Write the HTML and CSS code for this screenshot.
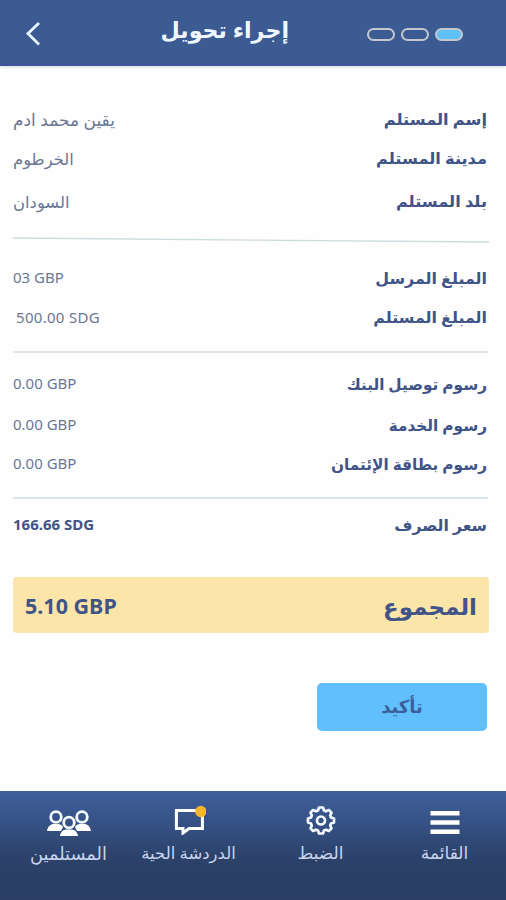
FILE: index.html
```
<!DOCTYPE html>
<html lang="ar" dir="rtl">
<head>
    <meta charset="UTF-8">
    <meta name="viewport" content="width=device-width, initial-scale=1.0">
    <title>إجراء تحويل</title>
    <link rel="stylesheet" href="styles.css">
</head>
<body>
    <header class="header">
        <div class="steps">
            <span class="step active"></span>
            <span class="step"></span>
            <span class="step"></span>
        </div>
        <h1>إجراء تحويل</h1>
        <svg class="back" viewBox="0 0 16 26"><path d="M14 2 3 12.500 14 23.500"/></svg>
    </header>

    <main class="content">
        <dl class="rows recipient">
            <div class="row"><dt>إسم المستلم</dt><dd class="name">يقين محمد ادم</dd></div>
            <div class="row"><dt>مدينة المستلم</dt><dd>الخرطوم</dd></div>
            <div class="row"><dt>بلد المستلم</dt><dd>السودان</dd></div>
        </dl>
        <svg class="slanted" viewBox="0 0 476 6"><path d="M0 1 476 5"/></svg>
        <dl class="rows amounts">
            <div class="row"><dt>المبلغ المرسل</dt><dd dir="ltr">03 GBP</dd></div>
            <div class="row"><dt>المبلغ المستلم</dt><dd class="received" dir="ltr">500.00 SDG</dd></div>
        </dl>
        <hr>
        <dl class="rows fees">
            <div class="row"><dt>رسوم توصيل البنك</dt><dd dir="ltr">0.00 GBP</dd></div>
            <div class="row"><dt>رسوم الخدمة</dt><dd dir="ltr">0.00 GBP</dd></div>
            <div class="row"><dt>رسوم بطاقة الإئتمان</dt><dd dir="ltr">0.00 GBP</dd></div>
        </dl>
        <hr>
        <dl class="rows rate">
            <div class="row"><dt>سعر الصرف</dt><dd dir="ltr">166.66 SDG</dd></div>
        </dl>
        <div class="total">
            <span class="total-label">المجموع</span>
            <span class="total-value" dir="ltr">5.10 GBP</span>
        </div>
        <button class="confirm" type="button">تأكيد</button>
    </main>

    <nav class="tabs">
        <a class="tab">
            <svg width="30" height="30" viewBox="0 0 30 30"><path fill="#fff" d="M0.500 6h29v4.500h-29zM0.500 15.200h29v4.500h-29zM0.500 24.400h29v4.500h-29z"/></svg>
            <span>القائمة</span>
        </a>
        <a class="tab">
            <svg width="30" height="30" viewBox="0 0 30 30" fill="none" stroke="#f4f8ff" stroke-width="2.700" stroke-linejoin="round">
                <path d="M13 2.500h4l1 3 2 .8 2.900-1.300 2.600 2.600-1.300 2.900.8 2 3 1v4l-3 1-.8 2 1.300 2.900-2.600 2.600-2.900-1.300-2 .8-1 3h-4l-1-3-2-.8L7.100 26l-2.600-2.600 1.300-2.900-.8-2-3-1v-4l3-1 .8-2-1.300-2.900L7.100 5 10 6.300l2-.8z"/>
                <circle cx="15" cy="15.500" r="4"/>
            </svg>
            <span>الضبط</span>
        </a>
        <a class="tab">
            <svg width="34" height="30" viewBox="0 0 34 30">
                <path fill="none" stroke="#fff" stroke-width="3" d="M4.400 5.500h26v18H17l-6 4.500v-4.500H4.400z"/>
                <circle cx="28.800" cy="6.500" r="5.700" fill="#f3b52e"/>
            </svg>
            <span class="chat-label">الدردشة الحية</span>
        </a>
        <a class="tab">
            <svg width="46" height="32" viewBox="0 0 46 32">
                <g fill="none" stroke="#f4f8ff" stroke-width="2.800">
                    <circle cx="10" cy="12" r="5.300"/>
                    <circle cx="36" cy="12" r="5.300"/>
                    <circle cx="23" cy="17.500" r="5.300"/>
                </g>
                <path fill="#fff" d="M1 26c.8-4.500 3.500-7 7-7h4c2 0 3.800.8 5 3L15 26zM45 26c-.8-4.500-3.500-7-7-7h-4c-2 0-3.800.8-5 3l2 4zM14 31c.8-4.500 3.500-6.500 7-6.500h4c3.500 0 6.200 2 7 6.500z"/>
            </svg>
            <span class="people-label">المستلمين</span>
        </a>
    </nav>
</body>
</html>
```
FILE: styles.css
```
* {
    box-sizing: border-box;
}

body {
    margin: 0;
    height: 900px;
    display: flex;
    flex-direction: column;
    font-family: "Noto Sans", "DejaVu Sans", sans-serif;
    background: #fefefe;
    color: #405487;
    overflow: hidden;
}

.header {
    height: 66px;
    flex: none;
    display: grid;
    grid-template-columns: 96px 1fr 16px;
    align-items: center;
    padding: 2px 43px 0 25px;
    background: #3c5b93;
    border-bottom: 2px solid #3e559b;
    box-shadow: 0 1px 3px #cfd9d9;
}

.steps {
    display: flex;
    gap: 6px;
    padding-top: 3px;
}

.step {
    width: 28px;
    height: 13px;
    border: 2px solid #c3c8cd;
    border-radius: 7px;
}

.step.active {
    background: #5ebffb;
}

h1 {
    margin: 0 78px 6px 0;
    font-size: 22.2px;
    line-height: 34px;
    font-weight: bold;
    color: #f0f8ff;
    white-space: nowrap;
}

.back {
    width: 16px;
    height: 26px;
    margin-top: 1px;
    fill: none;
    stroke: #e9f5ff;
    stroke-width: 2.8;
}

.content {
    flex: 1;
    display: flex;
    flex-direction: column;
    padding: 33px 19px 0 13px;
}

.rows {
    display: grid;
    margin: 0;
}

.row {
    display: flex;
    justify-content: space-between;
    align-items: center;
    white-space: nowrap;
    line-height: 24px;
}

dt {
    font-size: 16.2px;
    font-weight: bold;
}

dd {
    margin: 0;
    padding-bottom: 2px;
    font-size: 15px;
    color: #6b7794;
}

.recipient {
    grid-template-rows: 39px 40px 46px;
}

.recipient dd {
    padding: 2px 0 0;
    font-size: 16.4px;
}

.recipient .name {
    font-size: 17px;
}

.slanted {
    width: 476px;
    height: 6px;
    margin: 13px -2px 16px 0;
    stroke: #ccdcdf;
    stroke-width: 1.3;
}

.amounts {
    grid-template-rows: 38px 40px;
}

.amounts dt {
    font-size: 15.9px;
}

.amounts .received {
    margin-left: 3px;
    padding-bottom: 0;
    letter-spacing: 0.3px;
}

hr {
    width: 475px;
    height: 2px;
    margin: 14px -1px 11px 0;
    border: 0;
    background: #dce5ea;
}

.fees {
    grid-template-rows: 40px 41px 38px;
}

.fees dt {
    font-size: 15.3px;
}

.rate {
    grid-template-rows: 30px;
}

.rate dt {
    font-size: 15.7px;
}

.rate dd {
    padding-bottom: 3px;
    font-weight: bold;
    color: #405487;
}

.total {
    height: 56px;
    width: 476px;
    margin: 37px -2px 0 0;
    padding: 2px 12px 0;
    display: flex;
    flex: none;
    align-items: center;
    justify-content: space-between;
    background: #fbe5a9;
    border-radius: 4px;
    font-weight: bold;
    line-height: 36px;
}

.total-label {
    font-size: 23px;
}

.total-value {
    font-size: 21.5px;
}

.confirm {
    width: 170px;
    height: 48px;
    margin-top: 50px;
    padding: 0 0 3px;
    border: 0;
    border-radius: 5px;
    background: #62bffe;
    color: #3c609c;
    font-family: inherit;
    font-size: 18px;
    font-weight: bold;
}

.tabs {
    height: 109px;
    flex: none;
    display: grid;
    grid-template-columns: 123px 125px 139px 101px;
    padding-top: 14px;
    background: linear-gradient(#3f609d, #2b4169 62%, #2b3f65);
}

.tab {
    display: flex;
    flex-direction: column;
    align-items: center;
    color: #c9d5ee;
    font-size: 17px;
    line-height: 24px;
    white-space: nowrap;
}

.tab span {
    margin-top: 6px;
}

.tab .chat-label {
    font-size: 16.5px;
}

.tab .people-label {
    margin-top: 4px;
    font-size: 17.8px;
}
```
